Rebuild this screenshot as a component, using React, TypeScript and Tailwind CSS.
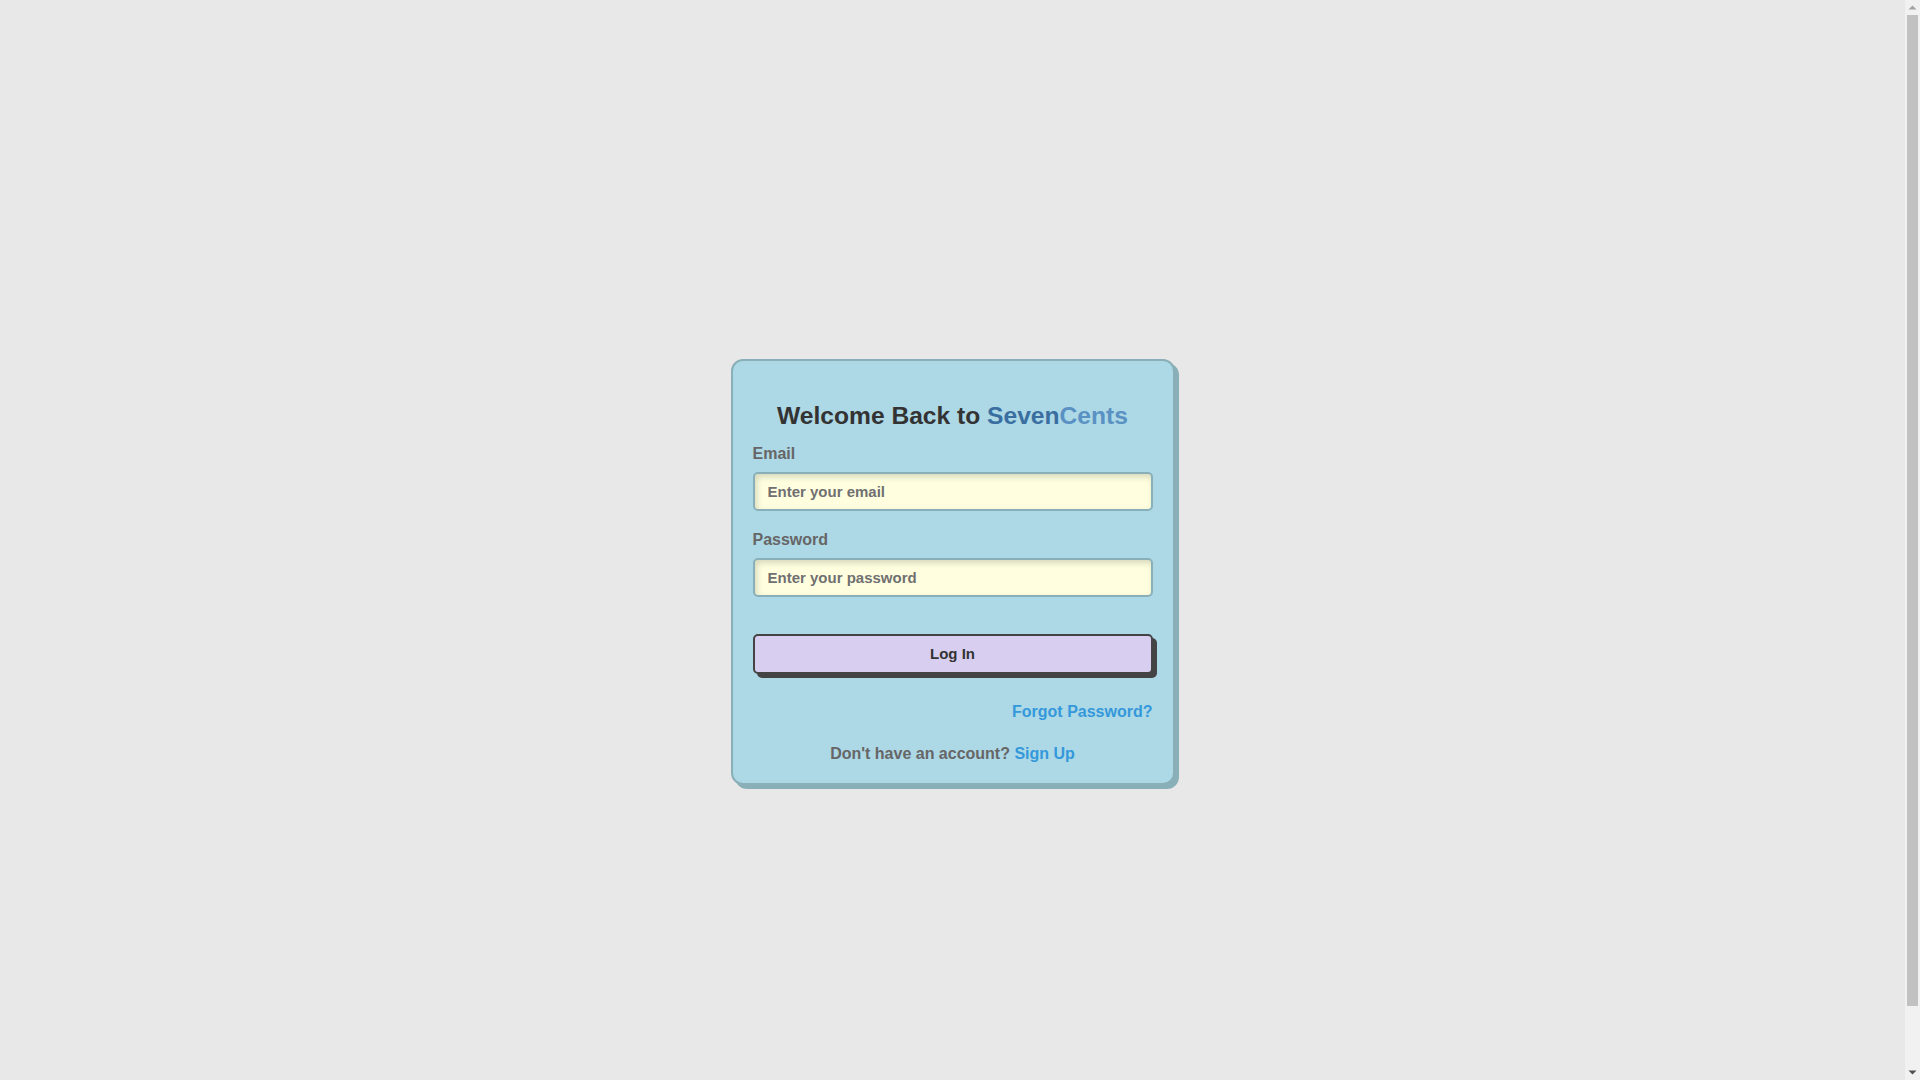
import React from 'react';

const inputClass =
  "block w-full h-[39px] px-[13px] rounded-[5px] border-2 border-[#89b0b8] bg-[#ffffe0] text-[15px] font-bold text-[#333] placeholder:text-[#707070] placeholder:font-bold outline-none shadow-[inset_2px_3px_6px_rgba(0,0,0,0.16)]";

const labelClass = "block mb-[9px] text-[16px] leading-[18px] font-bold text-[#666]";

// drawing of the browser's vertical scrollbar seen in the screenshot
function FakeScrollbar() {
  return (
    <div className="fixed top-0 right-0 h-screen w-[15px] bg-[#f1f1f1] flex flex-col items-center">
      <svg width="15" height="15" viewBox="0 0 15 15" className="shrink-0">
        <path d="M3.5 9.5 L7.5 5.5 L11.5 9.5 Z" fill="#a3a3a3" />
      </svg>
      <div className="w-[11px] h-[991px] bg-[#c1c1c1]" />
      <div className="flex-1" />
      <svg width="15" height="15" viewBox="0 0 15 15" className="shrink-0">
        <path d="M3.5 5.5 L11.5 5.5 L7.5 9.5 Z" fill="#505050" />
      </svg>
    </div>
  );
}

export default function App() {
  return (
    <div
      className="min-h-screen box-content py-8 pr-[15px] flex items-center justify-center bg-[#e8e8e8]"
      style={{ fontFamily: '"Liberation Sans", Arial, sans-serif' }}
    >
      <div className="w-[444px] rounded-[12px] border-2 border-[#89b0b8] bg-[#add8e6] px-5 pt-[41px] pb-5 shadow-[4px_4px_0_#89b0b8]">
        <h2 className="mb-[15px] text-center text-[24.6px] leading-[28px] font-bold text-[#333]">
          Welcome Back to <span className="text-[#3a6ea0]">Seven</span>
          <span className="text-[#5a91c3]">Cents</span>
        </h2>

        <form onSubmit={(e) => e.preventDefault()}>
          <label className={labelClass}>Email</label>
          <input type="email" placeholder="Enter your email" className={inputClass} />

          <label className={`${labelClass} mt-5`}>Password</label>
          <input type="password" placeholder="Enter your password" className={inputClass} />

          {/* Log in button */}
          <button
            type="submit"
            className="mt-[37px] block w-full h-[40px] rounded-[5px] border-2 border-[#444] bg-[#d8cff0] text-[15px] font-bold text-[#333] shadow-[4px_4px_0_#444]"
          >
            Log In
          </button>
        </form>

        <div className="mt-[29px] text-right text-[16px] leading-[18px] font-bold">
          <a href="#" className="text-[#3498db]">Forgot Password?</a>
        </div>

        <p className="mt-[24px] text-center text-[16px] leading-[18px] font-bold text-[#666]">
          Don't have an account? <a href="#" className="text-[#3498db]">Sign Up</a>
        </p>
      </div>
      <FakeScrollbar />
    </div>
  );
}
